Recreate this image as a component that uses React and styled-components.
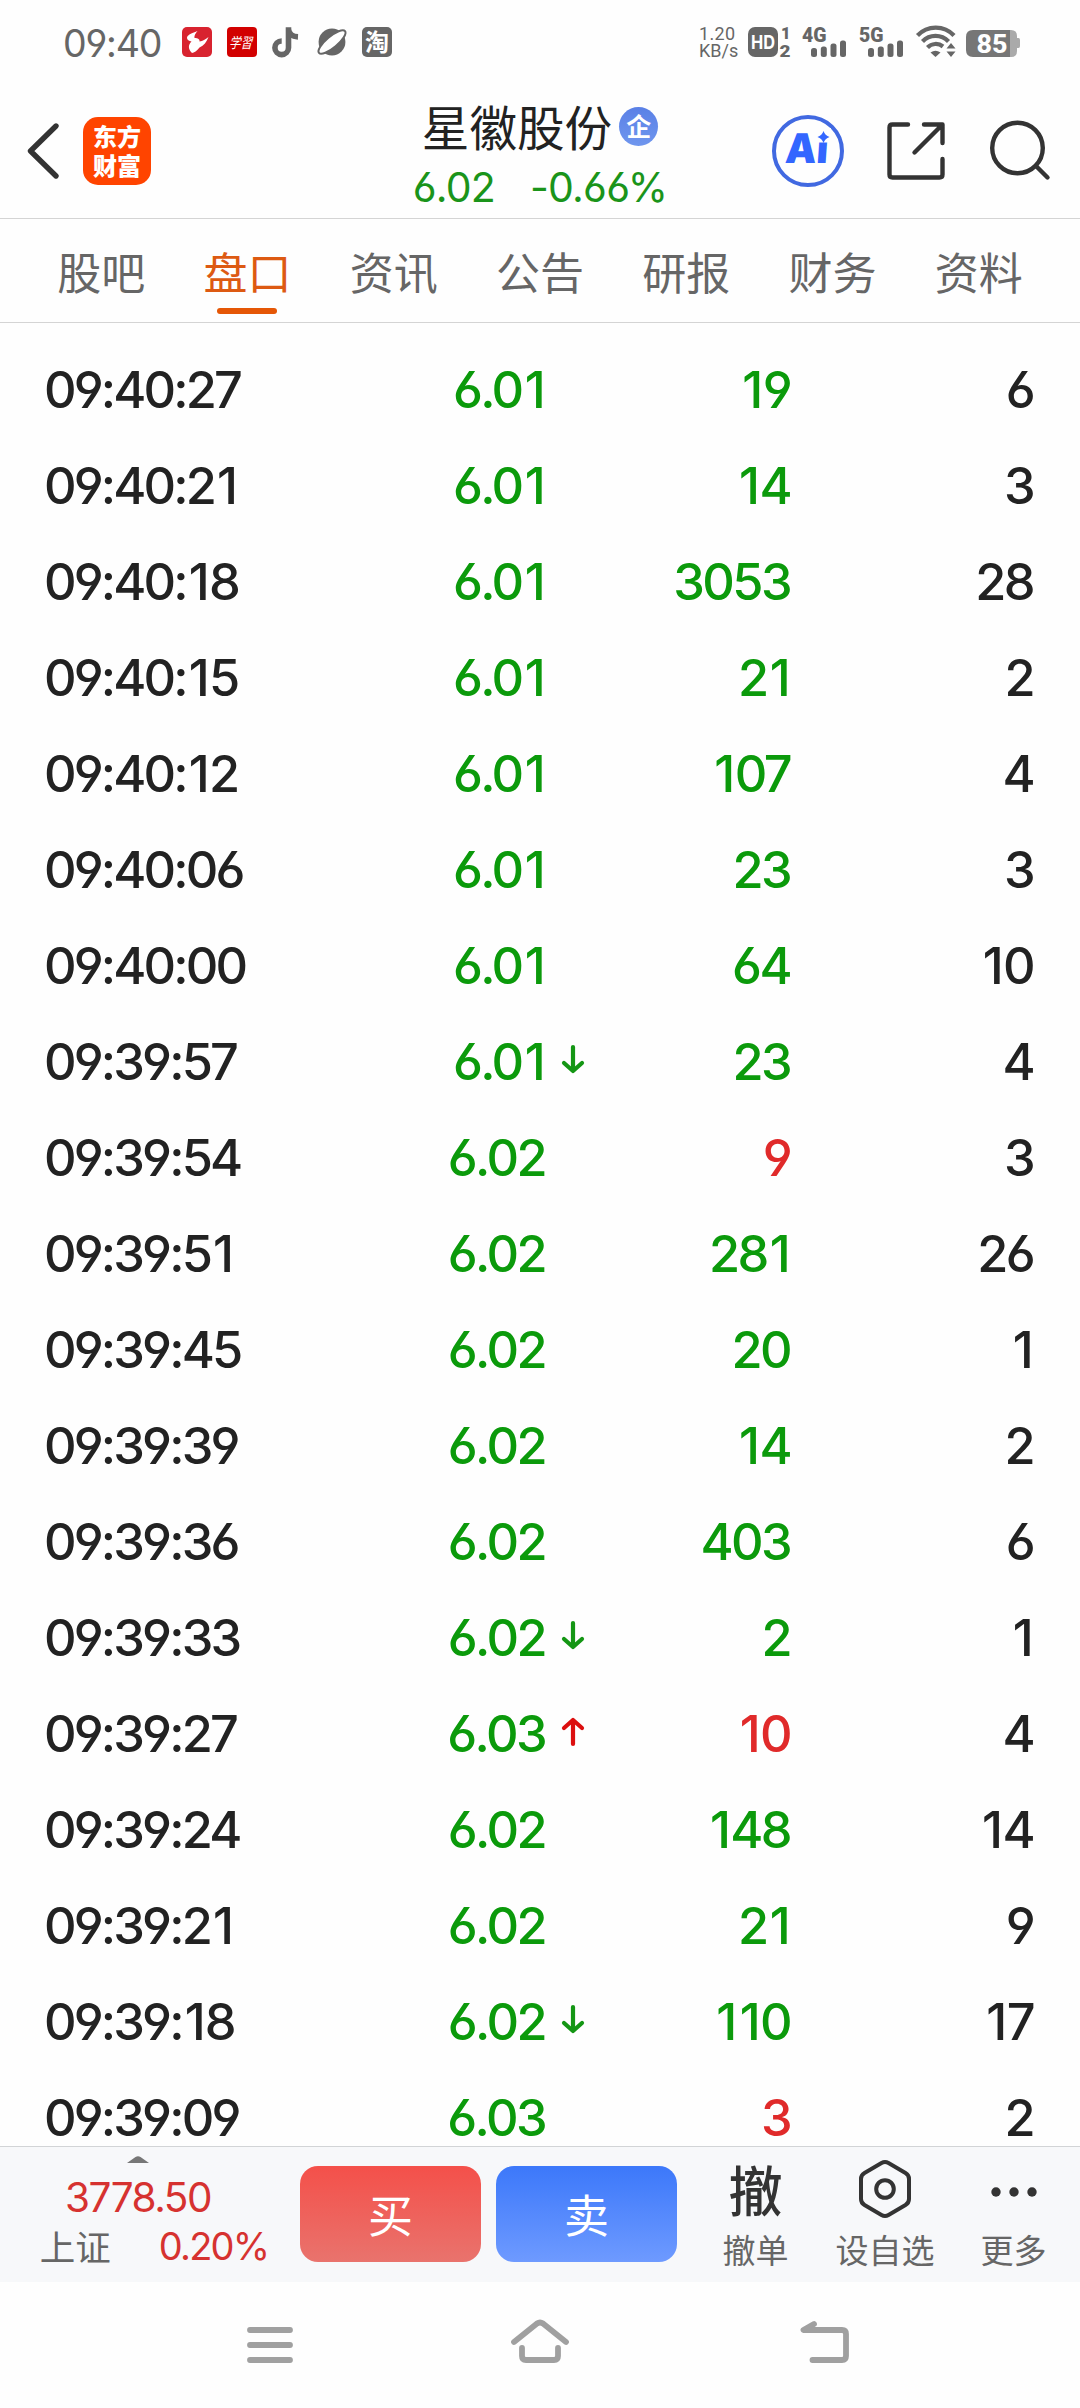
import React from 'react'
import styled, {createGlobalStyle} from 'styled-components'

const GREEN = '#0b9a0b',
      RED = '#e02a2a',
      DARK = '#222',
      GREY = '#666'

const cjk = `'Noto Sans CJK SC', sans-serif`
const digits = `Inter, 'Noto Sans CJK SC', sans-serif`

// straight-stemmed 6 and 9
const openDigits = `'cv03', 'cv04'`

const GlobalStyle = createGlobalStyle`
  * { box-sizing: border-box; }
  body {
    margin: 0;
    background: #fff;
    font-family: ${ cjk };
  }
  svg { display: block; flex: none; overflow: visible; }
`

const Screen = styled.div`
  width: 1080px;
  height: 2408px;
  display: flex;
  flex-direction: column;
  overflow: hidden;
  background: #fefefe;
`

/* status bar */

const StatusBar = styled.div`
  height: 84px;
  flex: none;
  display: flex;
  align-items: center;
  padding: 0 60px 0 63px;
  color: ${ GREY };
`
const Clock = styled.div`
  width: 119px;
  padding-top: 4px;
  font: 400 37.5px/44px ${ digits };
  font-feature-settings: ${ openDigits };
  letter-spacing: -1.2px;
`
const AppIcons = styled.div`
  display: flex;
  align-items: center;
  gap: 15px;
`
const StatusRight = styled.div`
  margin-left: auto;
  display: flex;
  align-items: center;
`
const Speed = styled.div`
  width: 49px;
  display: flex;
  flex-direction: column;
  font: 400 18px/17px Roboto, sans-serif;
  white-space: nowrap;
`
const SpeedValue = styled.span`
  letter-spacing: 0.3px;
`

/* header */

const Header = styled.div`
  height: 135px;
  flex: none;
  display: grid;
  grid-template-columns: 380px 1fr 380px;
  border-bottom: 1px solid #d4d4d4;
`
const HeaderLeft = styled.div`
  display: flex;
  align-items: center;
  padding-left: 25px;
  gap: 22px;
`
const Logo = styled.div`
  width: 68px;
  height: 68px;
  border-radius: 15px;
  background: #ff4400;
  color: #fff;
  font: 900 24px/29px ${ cjk };
  display: flex;
  flex-direction: column;
  align-items: center;
  justify-content: center;
  padding-bottom: 3px;
`
const HeaderTitle = styled.div`
  display: flex;
  flex-direction: column;
  align-items: center;
  padding-top: 14px;
`
const NameLine = styled.div`
  display: flex;
  align-items: center;
  gap: 7px;
  height: 56px;
  color: ${ DARK };
  font: 400 47.6px/56px ${ cjk };
`
const Badge = styled.span`
  width: 39px;
  height: 39px;
  border-radius: 50%;
  background: linear-gradient(#5a80e6, #6f96ee);
  color: #fff;
  font: 700 25px/37px ${ cjk };
  text-align: center;
`
const QuoteLine = styled.div`
  display: flex;
  gap: 35px;
  height: 60px;
  padding-top: 2px;
  color: #1a941a;
  font: 400 41px/62px ${ digits };
  font-feature-settings: ${ openDigits };
  letter-spacing: -0.8px;
`
const HeaderRight = styled.div`
  display: flex;
  align-items: center;
  justify-content: flex-end;
  gap: 42px;
  padding-right: 28px;
`

/* tabs */

const Tabs = styled.div`
  height: 104px;
  flex: none;
  display: flex;
  padding: 0 28px;
  border-bottom: 1px solid #d4d4d4;
`
const Tab = styled.div`
  flex: 1;
  display: flex;
  flex-direction: column;
  align-items: center;
  padding-top: 20px;
  font: 400 44px/64px ${ cjk };
  color: ${ p => p.$active ? '#dd5a12' : GREY };

  &::after {
    content: '';
    width: 60px;
    height: 6px;
    margin-top: 5px;
    border-radius: 3px;
    background: ${ p => p.$active ? '#e55706' : 'transparent' };
  }
`

/* trade list */

const List = styled.div`
  flex: 1;
  min-height: 0;
  overflow: hidden;
  padding: 19px 47px 0 44px;
`
const Row = styled.div`
  height: 96px;
  display: grid;
  grid-template-columns: 300px 201px 62px 183px 1fr;
  align-items: center;
  color: ${ DARK };
  font: 500 50.5px/56px ${ digits };
  font-feature-settings: ${ openDigits };
  letter-spacing: -2.6px;
`
const Cell = styled.span`
  color: ${ p => p.$color || 'inherit' };
  text-align: right;
  white-space: nowrap;
`
const TimeCell = styled(Cell)`
  text-align: left;
  letter-spacing: -2.85px;
`
const One = styled.span`
  margin: 0 2px 0 3px;
`
const ArrowCell = styled.span`
  padding: 0 0 6px 17px;
`

/* bottom bars */

const TradeBar = styled.div`
  height: 136px;
  flex: none;
  display: flex;
  background: #f7f8fa;
  border-top: 1px solid #d2d4d6;
`
const IndexBox = styled.div`
  width: 300px;
  display: flex;
  flex-direction: column;
  align-items: center;
  padding: 9px 24px 0 0;
  color: #d63230;
`
const IndexValue = styled.div`
  margin-top: 10px;
  font: 400 40.5px/50px ${ digits };
  letter-spacing: -1.5px;
`
const IndexLine = styled.div`
  display: flex;
  align-items: center;
  gap: 48px;
  margin-top: -2px;
  padding-left: 32px;
  font: 400 38px/50px ${ digits };
  letter-spacing: -1.8px;
`
const IndexName = styled.span`
  color: ${ GREY };
  font: 400 35.5px/50px ${ cjk };
  letter-spacing: 0;
`
const TradeButton = styled.button`
  width: 181px;
  height: 96px;
  margin: 19px 15px 0 0;
  padding: 0 0 1px;
  border: 0;
  border-radius: 18px;
  background: linear-gradient(${ p => p.$from }, ${ p => p.$to });
  color: #fff;
  font: 400 45px/60px ${ cjk };
`
const Action = styled.div`
  width: ${ p => p.$width }px;
  display: flex;
  flex-direction: column;
  align-items: center;
  color: ${ GREY };
  font: 400 33px/44px ${ cjk };
`
const ActionIcon = styled.div`
  height: 80px;
  display: flex;
  align-items: center;
  padding-top: ${ p => p.$drop }px;
  color: #333;
  font: 500 54px/80px ${ cjk };
`
const NavBar = styled.div`
  height: 126px;
  flex: none;
  display: flex;
  gap: 210px;
  padding: 36px 0 0 240px;
`

/* icons */

const EastIcon =()=>
  <svg width='30' height='30' viewBox='0 0 30 30'>
    <rect width='30' height='30' rx='5' fill='#d8232f'/>
    <path d='M15.500 4 C9 6.500 5 8 5 11 C5 13 7 14 9.500 14.500 C6 18 6 22 10 26 C12 25.500 15 24 17.500 20.500 C22 18.500 24.500 15 26.500 10 C23 12.500 21 14 17.500 14.500 C18 12.500 16 11 12.500 11 C12 8.500 13.500 6.500 15.500 4Z' fill='#fff'/>
  </svg>

const StudyIcon =()=>
  <svg width='30' height='30' viewBox='0 0 30 30'>
    <rect width='30' height='30' rx='4' fill='#d20000'/>
    <text x='15' y='16.500' textAnchor='middle' fontSize='11.500' fontWeight='400' fill='#fff' fontFamily={ cjk } transform='skewX(-14) translate(3.600 0) scale(1 1.25)'>学習</text>
  </svg>

const TiktokIcon =()=>
  <svg width='30' height='30' viewBox='0 0 30 30'>
    <path d='M17 0 V20.500 A6.800 6.800 0 1 1 10.200 13.700 M17 2 C17.500 6.500 20 9.300 26.500 9.600' fill='none' stroke='#666' strokeWidth='5.600' transform='translate(-0.500 0.300)'/>
  </svg>

const PlanetIcon =()=>
  <svg width='30' height='30' viewBox='0 0 30 30'>
    <circle cx='15' cy='15' r='13.400' fill='#666'/>
    <ellipse cx='15' cy='15' rx='17' ry='5.600' fill='#fff' stroke='#666' strokeWidth='2' transform='rotate(-40 15 15)'/>
  </svg>

const TaobaoIcon =()=>
  <svg width='30' height='30' viewBox='0 0 30 30'>
    <rect width='30' height='30' rx='5' fill='#666'/>
    <text x='15' y='23.500' textAnchor='middle' fontSize='24' fontWeight='700' fill='#fff' fontFamily={ cjk }>淘</text>
  </svg>

const HdIcon =()=>
  <svg width='54' height='32' viewBox='0 0 54 32'>
    <rect y='1' width='30' height='30' rx='7' fill='#666'/>
    <text x='3' y='22.500' fontSize='19' fontWeight='700' fill='#fff' fontFamily='Inter, sans-serif' textLength='24' lengthAdjust='spacingAndGlyphs'>HD</text>
    <text x='33' y='13' fontSize='16.500' fontWeight='900' fill='#666' fontFamily='Roboto, sans-serif'>1</text>
    <text x='31.500' y='31' fontSize='17' fontWeight='900' fill='#666' fontFamily='Roboto, sans-serif' textLength='11' lengthAdjust='spacingAndGlyphs'>2</text>
  </svg>

const SignalIcon =({ label })=>
  <svg width='57' height='32' viewBox='0 0 57 32'>
    <text x='0' y='15.500' fontSize='20' fontWeight='900' fill='#666' fontFamily='Roboto, sans-serif' textLength='24.500' lengthAdjust='spacingAndGlyphs'>{ label }</text>
    <g fill='#666'>
      <rect x='9' y='22' width='6' height='9' rx='2.500'/>
      <rect x='18.800' y='20.500' width='6' height='10.500' rx='2.500'/>
      <rect x='28.500' y='17.500' width='6' height='13.500' rx='2.500'/>
      <rect x='38' y='14.500' width='6' height='16.500' rx='2.500'/>
    </g>
  </svg>

const WifiIcon =()=>
  <svg width='50' height='32' viewBox='0 0 50 32'>
    <g fill='none' stroke='#666' strokeWidth='4.200'>
      <path d='M1.500 9.500 A25 25 0 0 1 38 9.500'/>
      <path d='M6.500 15.500 A18 18 0 0 1 32.500 15.500'/>
      <path d='M11.500 21.500 A11.500 11.500 0 0 1 27 20.500'/>
    </g>
    <path d='M14.500 26.500 Q19.500 23 24.500 26.500 L19.500 31Z' fill='#666'/>
    <path d='M30.500 22.500 L35 17 L39.500 22.500Z M30.500 25.500 L35 31 L39.500 25.500Z' fill='#666'/>
  </svg>

const BatteryIcon =()=>
  <svg width='54' height='32' viewBox='0 0 54 32'>
    <path d='M40 4 H45 Q51 4 51 10 V12 H52.500 Q54 12 54 14 V20 Q54 22 52.500 22 H51 V25 Q51 31 45 31 H40Z' fill='#aaa'/>
    <path d='M7 4 H44 V31 H7 Q0 31 0 24 V11 Q0 4 7 4Z' fill='#767676'/>
    <text x='10.500' y='27' fontSize='26' fontWeight='800' fill='#fff' fontFamily='Roboto, sans-serif' textLength='31' lengthAdjust='spacingAndGlyphs'>85</text>
  </svg>

const BackIcon =()=>
  <svg width='36' height='58' viewBox='0 0 36 58' fill='none' stroke='#333' strokeWidth='5.400' strokeLinecap='round' strokeLinejoin='round'>
    <path d='M31 4 L5.500 29 L31 54'/>
  </svg>

const AiIcon =()=>
  <svg width='74' height='74' viewBox='0 0 74 74'>
    <circle cx='37' cy='37' r='34' fill='none' stroke='#4169e1' strokeWidth='4'/>
    <text x='17' y='49.500' fontFamily='Inter, sans-serif' fontWeight='900' fontSize='41' fill='#3366ff' textLength='43' lengthAdjust='spacingAndGlyphs' transform='skewX(-4)'>Ai</text>
    <rect x='43' y='14' width='17' height='14.500' fill='#fefefe'/>
    <path d='M52.500 17 Q54 21.500 58.500 23 Q54 24.500 52.500 29 Q51 24.500 46.500 23 Q51 21.500 52.500 17Z' fill='#3366ff'/>
  </svg>

const ShareIcon =()=>
  <svg width='58' height='58' viewBox='0 0 58 58' fill='none' stroke='#333' strokeWidth='4.400' strokeLinecap='round' strokeLinejoin='round'>
    <path d='M21 2.500 H5.500 Q2.500 2.500 2.500 5.500 V52.500 Q2.500 55.500 5.500 55.500 H52.500 Q55.500 55.500 55.500 52.500 V37'/>
    <path d='M37 2.500 H55.500 V21 M55 3 L27.500 30.500'/>
  </svg>

const SearchIcon =()=>
  <svg width='65' height='62' viewBox='-3 0 65 62' fill='none' stroke='#333' strokeWidth='4.400' strokeLinecap='round'>
    <circle cx='27.500' cy='28' r='25.300'/>
    <path d='M46 46 L57.500 57.500'/>
  </svg>

const Arrow =({ up })=>
  <svg width='24' height='30' viewBox='0 0 24 30' fill='none' stroke={ up ? '#dc0f0f' : '#149614' } strokeWidth='4.200' strokeLinecap='round' strokeLinejoin='round'>
    <path d={ up ? 'M11 28 V4 M2 12 L11 4 L20 12' : 'M11 3 V27 M2 19 L11 27 L20 19' }/>
  </svg>

const HexIcon =()=>
  <svg width='54' height='58' viewBox='0 0 54 58' fill='none' stroke='#333' strokeWidth='4'>
    <path d='M23.500 3 Q27 1 30.500 3 L47.500 13 Q51 15 51 19 V39 Q51 43 47.500 45 L30.500 55 Q27 57 23.500 55 L6.500 45 Q3 43 3 39 V19 Q3 15 6.500 13Z'/>
    <circle cx='27' cy='29' r='8.800'/>
  </svg>

const DotsIcon =()=>
  <svg width='46' height='12' viewBox='0 0 46 12' fill='#333'>
    <circle cx='5' cy='6' r='4.700'/>
    <circle cx='23' cy='6' r='4.700'/>
    <circle cx='41' cy='6' r='4.700'/>
  </svg>

const navStroke = {
  height: 46, fill: 'none', stroke: '#a0a0a0',
  strokeWidth: 5.8, strokeLinecap: 'round', strokeLinejoin: 'round'
}

const MenuIcon =()=>
  <svg width='60' viewBox='0 0 60 46' { ...navStroke }>
    <path d='M10 12 H50 M10 27 H50 M10 42 H50'/>
  </svg>

const HomeIcon =()=>
  <svg width='60' viewBox='0 0 60 46' { ...navStroke }>
    <path d='M4 24 L27 5.500 Q30 3.500 33 5.500 L56 24'/>
    <path d='M12 30 V38 Q12 42 16 42 H44 Q48 42 48 38 V30'/>
  </svg>

const ReturnIcon =()=>
  <svg width='75' viewBox='-15 0 75 46' { ...navStroke }>
    <path d='M19 6 L8.500 12 H47 Q51 12 51 16 V38 Q51 42 47 42 H17.500'/>
  </svg>

const tabs = ['股吧', '盘口', '资讯', '公告', '研报', '财务', '资料']

// time, price, volume, count, direction, volume bought
const trades = [
  ['09:40:27', '6.01', 19, 6],
  ['09:40:21', '6.01', 14, 3],
  ['09:40:18', '6.01', 3053, 28],
  ['09:40:15', '6.01', 21, 2],
  ['09:40:12', '6.01', 107, 4],
  ['09:40:06', '6.01', 23, 3],
  ['09:40:00', '6.01', 64, 10],
  ['09:39:57', '6.01', 23, 4, 'down'],
  ['09:39:54', '6.02', 9, 3, null, true],
  ['09:39:51', '6.02', 281, 26],
  ['09:39:45', '6.02', 20, 1],
  ['09:39:39', '6.02', 14, 2],
  ['09:39:36', '6.02', 403, 6],
  ['09:39:33', '6.02', 2, 1, 'down'],
  ['09:39:27', '6.03', 10, 4, 'up', true],
  ['09:39:24', '6.02', 148, 14],
  ['09:39:21', '6.02', 21, 9],
  ['09:39:18', '6.02', 110, 17, 'down'],
  ['09:39:09', '6.03', 3, 2, null, true]
]

// the proportional 1 is too tight next to the other digits
const spaced =(value)=>
  String(value).split(/(1)/).map((part, i) => part === '1' ? <One key={ i }>1</One> : part)

const TradeRow =({ trade: [time, price, volume, count, move, bought] })=>
  <Row>
    <TimeCell>{ spaced(time) }</TimeCell>
    <Cell $color={ GREEN }>{ spaced(price) }</Cell>
    <ArrowCell>{ move && <Arrow up={ move === 'up' }/> }</ArrowCell>
    <Cell $color={ bought ? RED : GREEN }>{ spaced(volume) }</Cell>
    <Cell>{ spaced(count) }</Cell>
  </Row>

const App =()=>
  <Screen>
    <GlobalStyle/>
    <StatusBar>
      <Clock>09:40</Clock>
      <AppIcons>
        <EastIcon/>
        <StudyIcon/>
        <TiktokIcon/>
        <PlanetIcon/>
        <TaobaoIcon/>
      </AppIcons>
      <StatusRight>
        <Speed><SpeedValue>1.20</SpeedValue><span>KB/s</span></Speed>
        <HdIcon/>
        <SignalIcon label='4G'/>
        <SignalIcon label='5G'/>
        <WifiIcon/>
        <BatteryIcon/>
      </StatusRight>
    </StatusBar>
    <Header>
      <HeaderLeft>
        <BackIcon/>
        <Logo><span>东方</span><span>财富</span></Logo>
      </HeaderLeft>
      <HeaderTitle>
        <NameLine>星徽股份<Badge>企</Badge></NameLine>
        <QuoteLine><span>6.02</span><span>-0.66%</span></QuoteLine>
      </HeaderTitle>
      <HeaderRight>
        <AiIcon/>
        <ShareIcon/>
        <SearchIcon/>
      </HeaderRight>
    </Header>
    <Tabs>
      { tabs.map(name => <Tab key={ name } $active={ name === '盘口' }>{ name }</Tab>) }
    </Tabs>
    <List>
      { trades.map(trade => <TradeRow key={ trade[0] } trade={ trade }/>) }
    </List>
    <TradeBar>
      <IndexBox>
        <svg width='22' height='7' viewBox='0 0 22 7' fill='#777'><path d='M0 7 L8.500 1 Q11 -0.500 13.500 1 L22 7Z'/></svg>
        <IndexValue>3778.50</IndexValue>
        <IndexLine><IndexName>上证</IndexName><span>0.20%</span></IndexLine>
      </IndexBox>
      <TradeButton $from='#f4504a' $to='#e9736d'>买</TradeButton>
      <TradeButton $from='#3c78fa' $to='#6e9aff'>卖</TradeButton>
      <Action $width={ 127 }><ActionIcon $drop={ 3 }>撤</ActionIcon>撤单</Action>
      <Action $width={ 132 }><ActionIcon $drop={ 4 }><HexIcon/></ActionIcon>设自选</Action>
      <Action $width={ 125 }><ActionIcon $drop={ 10 }><DotsIcon/></ActionIcon>更多</Action>
    </TradeBar>
    <NavBar>
      <MenuIcon/>
      <HomeIcon/>
      <ReturnIcon/>
    </NavBar>
  </Screen>

export default App
